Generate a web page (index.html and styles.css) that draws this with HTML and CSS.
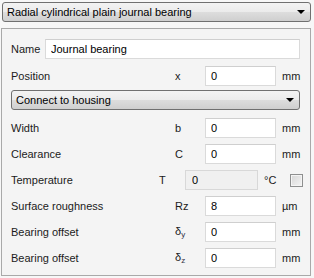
FILE: index.html
```html
<!DOCTYPE html>
<html lang="en">
<head>
    <meta charset="UTF-8">
    <title>Bearing</title>
    <link rel="stylesheet" href="styles.css">
</head>
<body>

    <div class="select top-select">
        <span>Radial cylindrical plain journal bearing</span>
        <span class="arrow"></span>
    </div>

    <div class="panel">
        <div class="row name-row">
            <span class="label">Name</span>
            <input type="text" class="field wide" value="Journal bearing">
        </div>

        <div class="row">
            <span class="label">Position</span>
            <span class="sym">x</span>
            <input type="text" class="field" value="0">
            <span class="unit">mm</span>
        </div>

        <div class="select inner-select">
            <span>Connect to housing</span>
            <span class="arrow"></span>
        </div>

        <div class="row">
            <span class="label">Width</span>
            <span class="sym">b</span>
            <input type="text" class="field" value="0">
            <span class="unit">mm</span>
        </div>

        <div class="row">
            <span class="label">Clearance</span>
            <span class="sym">C</span>
            <input type="text" class="field" value="0">
            <span class="unit">mm</span>
        </div>

        <div class="row temp-row">
            <span class="label">Temperature</span>
            <span class="sym">T</span>
            <input type="text" class="field" value="0" disabled>
            <span class="unit">°C</span>
            <span class="check"></span>
        </div>

        <div class="row">
            <span class="label">Surface roughness</span>
            <span class="sym">Rz</span>
            <input type="text" class="field" value="8">
            <span class="unit">µm</span>
        </div>

        <div class="row">
            <span class="label">Bearing offset</span>
            <span class="sym">δ<sub>y</sub></span>
            <input type="text" class="field" value="0">
            <span class="unit">mm</span>
        </div>

        <div class="row">
            <span class="label">Bearing offset</span>
            <span class="sym">δ<sub>z</sub></span>
            <input type="text" class="field" value="0">
            <span class="unit">mm</span>
        </div>
    </div>

</body>
</html>
```

FILE: styles.css
```css
body {
    font-family: "Liberation Sans", Arial, sans-serif;
    font-size: 11px;
    color: #1b1b1b;
    background: #f7f7f7;
    margin: 0;
    padding: 2px 3px 0 2px;
    width: 309px;
}
.select {
    display: flex;
    align-items: center;
    justify-content: space-between;
    height: 18px;
    padding: 0 5px 0 4px;
    border: 1px solid #707070;
    border-radius: 3px;
    background: linear-gradient(#f3f3f3, #ebebeb 50%, #dddddd 51%, #cfcfcf);
    color: #000;
    font-size: 11px;
}
.arrow {
    width: 0;
    height: 0;
    border-left: 4px solid transparent;
    border-right: 4px solid transparent;
    border-top: 4px solid #000;
}
.panel {
    margin: 6px 0 0 -1px;
    border: 1px solid #a9a9a9;
    background: #f4f4f4;
    height: 236px;
    padding: 10px 9px 0 8px;
}
.row {
    display: flex;
    align-items: center;
    height: 20px;
    margin-bottom: 6px;
}
.label {
    flex: 1;
    padding-left: 1px;
}
.sym {
    width: 30px;
}
.field {
    width: 71px;
    height: 20px;
    box-sizing: border-box;
    border: 1px solid #dadada;
    border-top-color: #cfcfcf;
    background: #fff;
    font: inherit;
    color: #000;
    padding: 0 5px;
    margin: 0;
}
.field:disabled {
    background: #f0f0f0;
    border-color: #d8d8d8;
    color: #000;
}
.unit {
    width: 19px;
    padding-left: 6px;
}
.name-row {
    margin-bottom: 7px;
}
.name-row .label {
    flex: none;
    width: 34px;
}
.wide {
    flex: 1;
    width: auto;
    margin-right: 1px;
}
.inner-select {
    margin: -2px 1px 8px 1px;
}
.temp-row .sym {
    width: 26px;
}
.temp-row .field {
    width: 73px;
    padding-left: 6px;
}
.temp-row .unit {
    width: 26px;
}
.check {
    width: 11px;
    height: 11px;
    border: 1px solid #8e8f8f;
    background: linear-gradient(135deg, #d6d6d6, #f4f4f4);
    box-shadow: inset 0 0 0 1px #f4f4f4;
    margin-right: -2px;
}
sub {
    font-size: 8px;
    vertical-align: -2px;
    color: #334;
}
```
